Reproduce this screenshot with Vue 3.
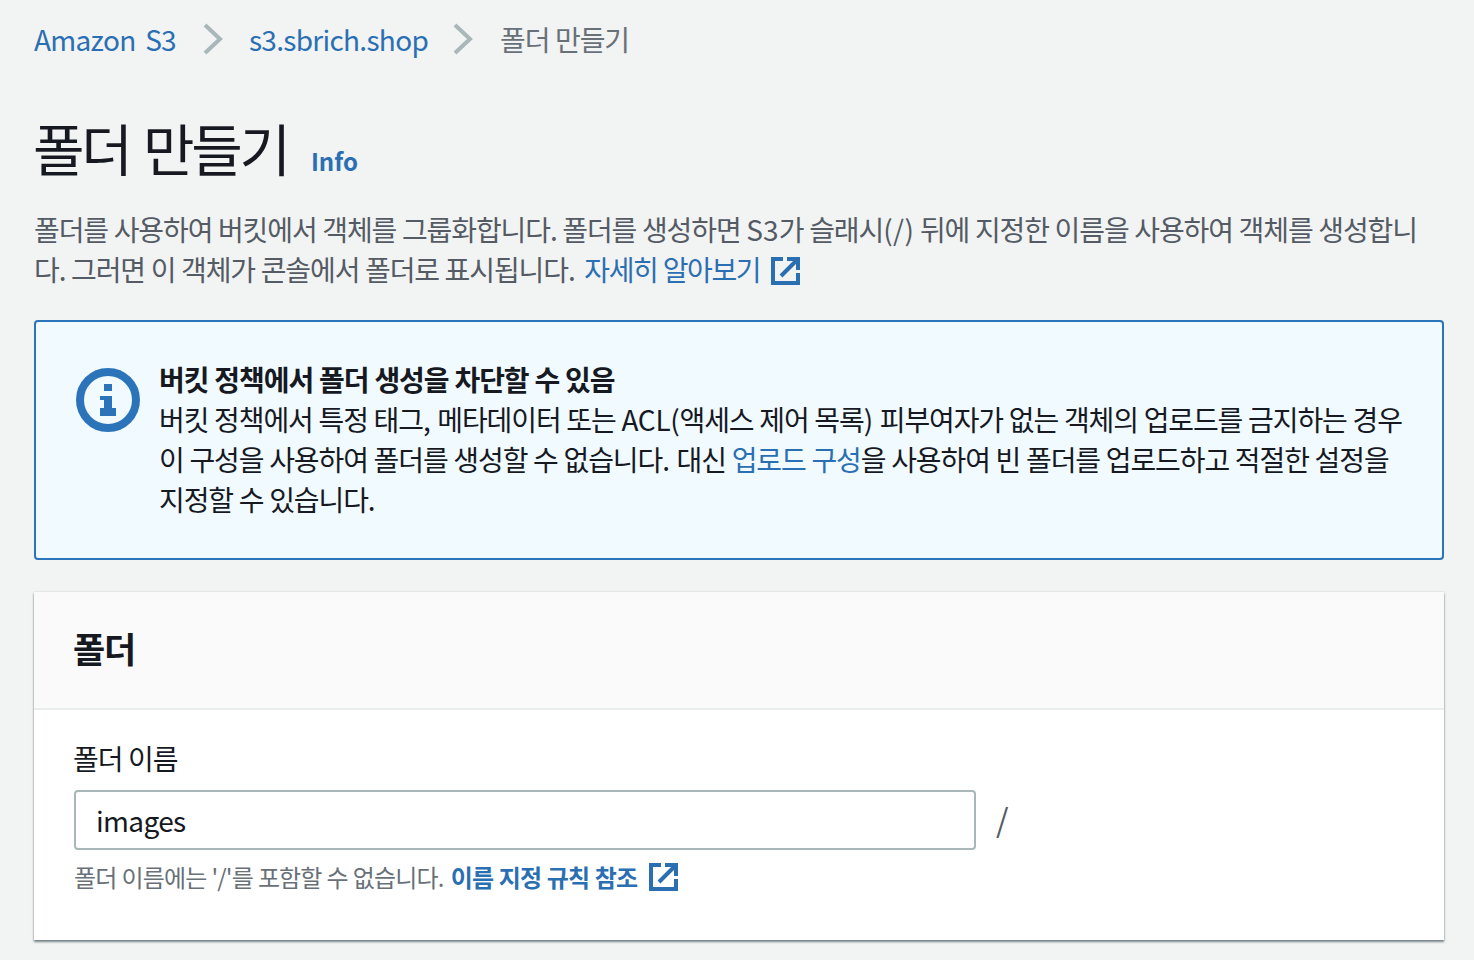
<script setup>
const crumbs = ['Amazon S3', 's3.sbrich.shop']
</script>

<template>
  <div class="page">
    <!-- breadcrumb -->
    <nav class="crumbs">
      <template v-for="c in crumbs" :key="c">
        <a class="crumb-link">{{ c }}</a>
        <svg class="chev" width="20" height="32" viewBox="0 0 20 32"><path d="M2 2 L17 16 L2 30" fill="none" stroke="#aab7b8" stroke-width="4" /></svg>
      </template>
      <span class="crumb-now">폴더 만들기</span>
    </nav>

    <div class="title-row">
      <h1>폴더 만들기</h1>
      <a class="info">Info</a>
    </div>

    <p class="desc">
      폴더를 사용하여 버킷에서 객체를 그룹화합니다. 폴더를 생성하면 <span class="lat">S3</span>가 슬래시<span class="punc">(/)</span> 뒤에 지정한 이름을 사용하여 객체를 생성합니다. 그러면 이 객체가 콘솔에서 폴더로 표시됩니다.
      <a class="link desc-link">자세히 알아보기</a>
      <svg class="ext" width="30" height="30" viewBox="0 0 30 30"><path d="M12 3 H2 V27 H27 V17" fill="none" stroke="#2b6fb3" stroke-width="4" /><path d="M10 20 L26 4 M16 3 H27 V14" fill="none" stroke="#2b6fb3" stroke-width="4" /></svg>
    </p>

    <div class="alert">
      <svg class="alert-icon" width="64" height="64" viewBox="0 0 64 64">
        <circle cx="32" cy="32" r="28" fill="none" stroke="#2b74b9" stroke-width="8" />
        <path d="M28 16 H36 V23 H28 Z M24 28 H36 V40 H40 V48 H24 V40 H28 V32 H24 Z" fill="#2b74b9" />
      </svg>
      <div class="alert-body">
        <div class="alert-title">버킷 정책에서 폴더 생성을 차단할 수 있음</div>
        <div>버킷 정책에서 특정 태그<span class="alert-punc">,</span> 메타데이터 또는 <span class="alert-lat">ACL(</span>액세스 제어 목록<span class="alert-punc">)</span> 피부여자가 없는 객체의 업로드를 금지하는 경우 이 구성을 사용하여 폴더를 생성할 수 없습니다<span class="alert-punc">.</span> 대신 <a class="link">업로드 구성</a>을 사용하여 빈 폴더를 업로드하고 적절한 설정을 지정할 수 있습니다<span class="alert-punc">.</span></div>
      </div>
    </div>

    <section class="card">
      <header class="card-head">
        <h2>폴더</h2>
      </header>
      <div class="card-body">
        <label class="label">폴더 이름</label>
        <div class="input-row">
          <input class="input" value="images" />
          <span class="slash">/</span>
        </div>
        <div class="hint">
          폴더 이름에는 '/'를 포함할 수 없습니다. <a class="hint-link">이름 지정 규칙 참조</a>
          <svg class="ext hint-ext" width="30" height="30" viewBox="0 0 30 30"><path d="M12 3 H2 V27 H27 V17" fill="none" stroke="#2b6fb3" stroke-width="4" /><path d="M10 20 L26 4 M16 3 H27 V14" fill="none" stroke="#2b6fb3" stroke-width="4" /></svg>
        </div>
      </div>
    </section>
  </div>
</template>

<style>
html, body {
  background: #f2f3f3;
}
</style>

<style scoped>
.page {
  box-sizing: border-box;
  height: 960px;
  overflow: hidden;
  padding: 19px 30px 0 34px;
  background: #f2f3f3;
  font-family: "Noto Sans CJK KR", "Noto Sans", sans-serif;
  font-size: 28px;
  line-height: 40px;
  color: #16191f;
  letter-spacing: -1.1px;
  word-spacing: 0.5px;
}

.lat {
  letter-spacing: 0.2px;
}

.punc {
  letter-spacing: 0.4px;
}

.crumbs {
  display: flex;
  align-items: center;
  height: 40px;
}

.crumb-link {
  color: #2b6fb3;
  letter-spacing: -0.7px;
  word-spacing: 4px;
}

.chev {
  margin: 0 26px 0 27px;
}

.crumb-link ~ .crumb-link + .chev {
  margin-left: 25px;
}

.crumb-now {
  margin-left: 1px;
  color: #687078;
}

.title-row {
  display: flex;
  align-items: baseline;
  margin-top: 48px;
  height: 80px;
}

h1 {
  margin: 0 0 0 -1px;
  font-size: 56px;
  font-weight: 400;
  line-height: 80px;
  letter-spacing: -3.2px;
  word-spacing: 4px;
}

.info {
  margin-left: 23px;
  font-size: 24px;
  font-weight: 700;
  color: #2b6fb3;
  letter-spacing: 0;
}

.desc {
  max-width: 1400px;
  margin: 22px 0 0;
  color: #545b64;
  word-break: break-all;
}

.link {
  color: #2b6fb3;
}

.desc-link {
  margin-left: 4px;
  letter-spacing: -1.4px;
}

.ext {
  vertical-align: -5px;
  margin-left: 11px;
}

.hint-ext {
  margin-left: 12px;
}

.alert {
  box-sizing: border-box;
  display: flex;
  gap: 19px;
  height: 240px;
  margin-top: 31px;
  padding: 37px 40px;
  border: 2px solid #2b74b9;
  border-radius: 4px;
  background: #f1faff;
  word-spacing: 0.6px;
  word-break: keep-all;
}

.alert-lat {
  letter-spacing: -0.3px;
}

.alert-punc {
  letter-spacing: 0.8px;
}

.alert-icon {
  flex: none;
  margin-top: 9px;
}

.alert-title {
  font-weight: 700;
  letter-spacing: -1.05px;
}

.card {
  margin-top: 32px;
  height: 348px;
  background: #fff;
  box-shadow: 0 2px 2px rgba(0, 28, 36, 0.5), 0 0 2px rgba(0, 28, 36, 0.15);
}

.card-head {
  box-sizing: border-box;
  height: 118px;
  display: flex;
  align-items: center;
  padding: 0 40px 4px;
  background: #fafafa;
  border-bottom: 2px solid #eaeded;
}

h2 {
  margin: 0 0 0 -1px;
  font-size: 35px;
  font-weight: 700;
  line-height: 40px;
}

.card-body {
  padding: 28px 40px 0;
}

.label {
  display: block;
  margin-left: -1px;
}

.input-row {
  display: flex;
  align-items: center;
  margin-top: 12px;
}

.input {
  box-sizing: border-box;
  width: 902px;
  height: 60px;
  padding: 0 20px;
  border: 2px solid #aab7b8;
  border-radius: 4px;
  background: #fff;
  font: inherit;
  color: #16191f;
  letter-spacing: -0.65px;
  outline: none;
}

.slash {
  margin: 0 0 5px 20px;
  font-size: 32px;
  color: #545b64;
}

.hint {
  margin-top: 7px;
  font-size: 24px;
  color: #687078;
  letter-spacing: -0.85px;
}

.hint-link {
  margin-left: 2px;
  color: #2b6fb3;
  font-weight: 700;
  letter-spacing: -0.7px;
}
</style>
